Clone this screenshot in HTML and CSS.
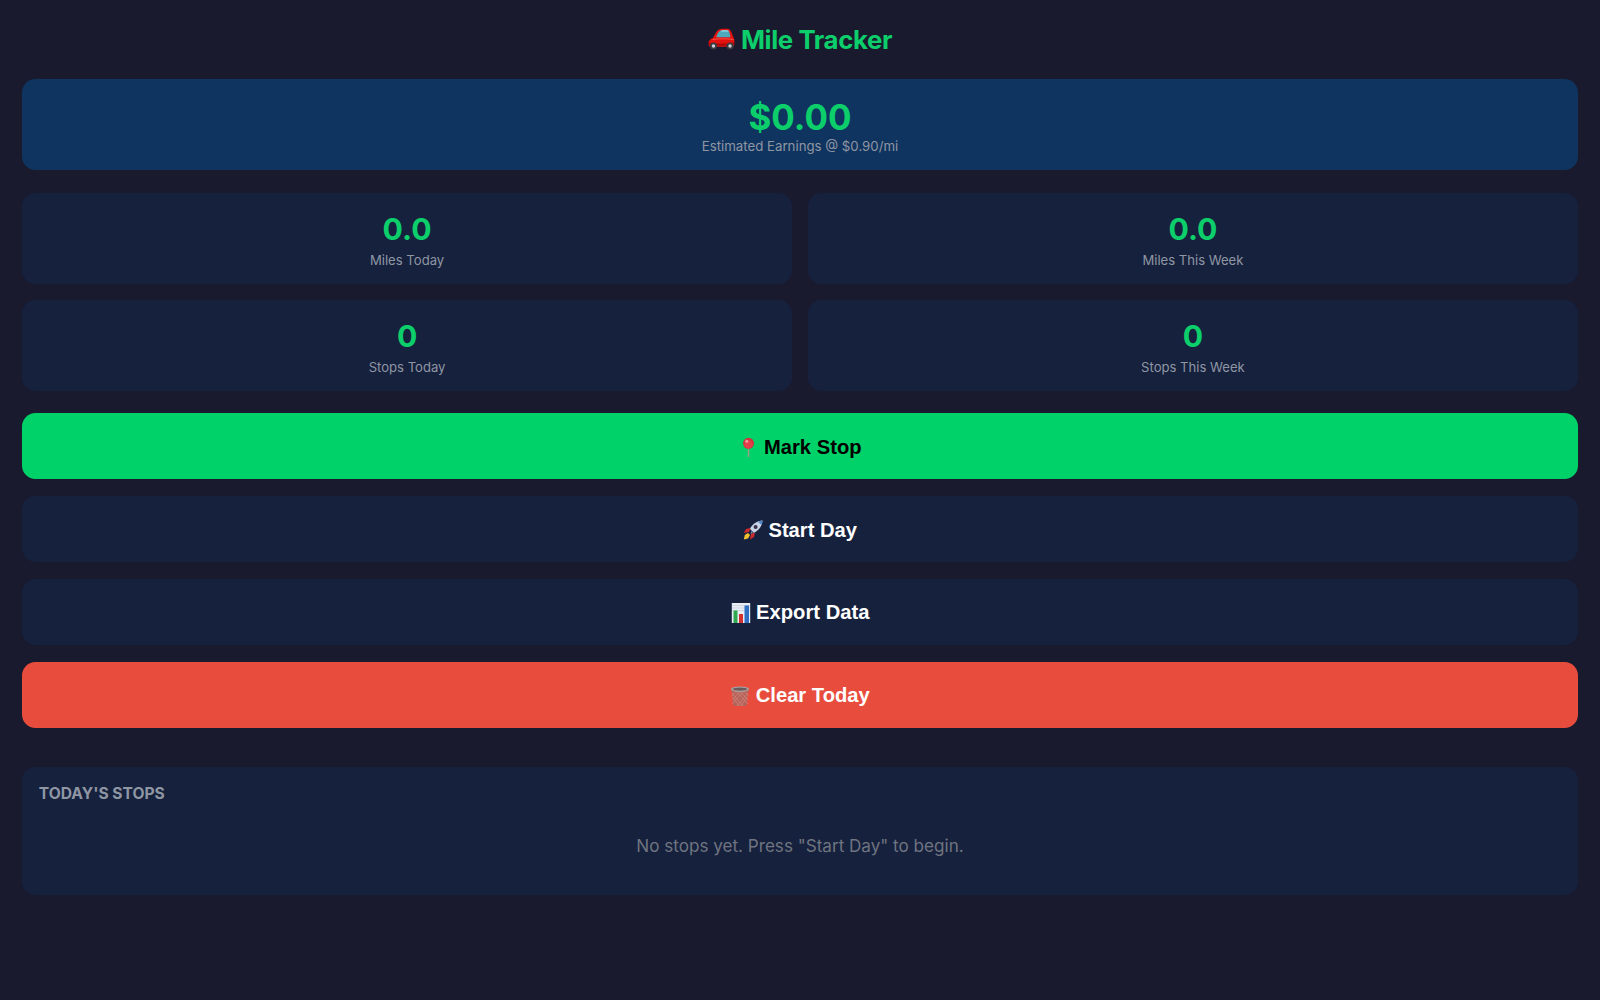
FILE: index.html
```html
<!DOCTYPE html>
<html lang="en">
<head>
<meta charset="utf-8">
<title>Mile Tracker</title>
<link rel="stylesheet" href="styles.css">
</head>
<body>
<main class="app">
  <h1 class="title">
    <svg class="emoji emoji-car" viewBox="0 0 27 22" aria-hidden="true">
      <path d="M.6 15.500c0-3 1.400-4.700 4.400-5.500C7.500 5 9.500 .8 14 .8h5c3 0 4.200 2 5 5l1.700 4c.9 2 .9 6 .3 8-.2.700-1 1-1.800 1H2.500C1.300 18.800.6 17.500.6 15.500z" fill="#e3120f"/>
      <path d="M8.300 9.200C9.500 5.500 11 2.300 14.200 2.300h5c1.800 0 2.600 2.500 3.200 6.900z" fill="#4fa9bd"/>
      <path d="M14 2.300h5.200c.7 0 1.300.4 1.700 1.200H12.500c.4-.7.900-1.100 1.500-1.200z" fill="#9adbe6"/>
      <path d="M.8 14.500c6 1.500 19 1.500 25.300 0v2c-6.500 1.800-19 1.800-25.300 0z" fill="#a80a0a"/>
      <path d="M4.500 11.500c6-1 14-1 21 0" stroke="#ff6a5c" stroke-width=".7" fill="none"/>
      <circle cx="5.500" cy="18" r="3.500" fill="#3a3a42"/><circle cx="5.500" cy="18" r="1.700" fill="#cfcfd6"/>
      <circle cx="22" cy="18" r="3.500" fill="#3a3a42"/><circle cx="22" cy="18" r="1.700" fill="#cfcfd6"/>
    </svg>
    <span>Mile Tracker</span>
  </h1>

  <section class="earnings">
    <div class="earnings-value">$0.00</div>
    <div class="earnings-label">Estimated Earnings @ $0.90/mi</div>
  </section>

  <section class="stats">
    <div class="stat"><div class="stat-value">0.0</div><div class="stat-label">Miles Today</div></div>
    <div class="stat"><div class="stat-value">0.0</div><div class="stat-label">Miles This Week</div></div>
    <div class="stat"><div class="stat-value">0</div><div class="stat-label">Stops Today</div></div>
    <div class="stat"><div class="stat-value">0</div><div class="stat-label">Stops This Week</div></div>
  </section>

  <section class="actions">
    <button class="btn btn-primary">
      <svg class="emoji emoji-btn" viewBox="0 0 20 20" aria-hidden="true">
        <path d="M10.500 10v9.500" stroke="#a8978c" stroke-width="1.400" stroke-linecap="round"/>
        <circle cx="10.500" cy="6.300" r="5.500" fill="#d4323c"/>
        <circle cx="10.500" cy="7.300" r="4.100" fill="#e2404a"/>
        <circle cx="8.700" cy="4.300" r="1.500" fill="#f59aa0"/>
      </svg>
      <span>Mark Stop</span>
    </button>
    <button class="btn btn-dark">
      <svg class="emoji emoji-btn" viewBox="0 0 20 20" aria-hidden="true">
        <path d="M7 8.500C9.500 4 14 1 19.500 .5c-.3 5.500-3.500 9.500-8.500 12.500L7 9z" fill="#c9d3e6"/>
        <path d="M19.500 .5c-.1 1.500-.5 3-1.100 4.300L15 2c1.300-.7 2.900-1.300 4.500-1.500z" fill="#4f86c6"/>
        <path d="M8 11l2 2c-1 .6-1.500.8-2.200.9z" fill="#7d8fae"/>
        <circle cx="12.600" cy="7" r="2" fill="#3a2f4a"/>
        <path d="M7.500 8L3 9 .8 13l5.200-1zM12 12.500L11 17l-4 2.500 1-5.500z" fill="#d02a2a"/>
        <path d="M5 13L1.800 15 .8 19.500l4.200-1 2-3.500z" fill="#f2c230"/>
      </svg>
      <span>Start Day</span>
    </button>
    <button class="btn btn-dark">
      <svg class="emoji emoji-btn" viewBox="0 0 20 20" aria-hidden="true">
        <rect x="0.800" y="0" width="18.400" height="20" fill="#e9eef5"/>
        <path d="M1 2.500h18M1 5h18M1 7.500h18" stroke="#bcc6d4" stroke-width=".6"/>
        <rect x="2.500" y="7.500" width="4" height="12.500" fill="#2fa84f"/>
        <rect x="8" y="11" width="4" height="9" fill="#d3302f"/>
        <rect x="13.500" y="2.500" width="4.500" height="17.500" fill="#2f6fc4"/>
      </svg>
      <span>Export Data</span>
    </button>
    <button class="btn btn-danger">
      <svg class="emoji emoji-btn" viewBox="0 0 20 20" aria-hidden="true">
        <path d="M1.500 4h17l-1.800 15c-.1.600-.5 1-1.100 1H4.400c-.6 0-1-.4-1.100-1z" fill="#b5645c"/>
        <path d="M2 7l11 13M2.500 11l7 9M5 4l13 14M9 4l9 10M13 4l5.500 6M18 7L7 20M17.500 11l-7 9M15 4L2 18M11 4L2.500 14M7 4L2 10" stroke="#dc8b80" stroke-width=".55"/>
        <ellipse cx="10" cy="3.200" rx="9" ry="2.700" fill="#a8a8ac"/>
        <ellipse cx="10" cy="3.200" rx="7.300" ry="1.600" fill="#6c5a58"/>
      </svg>
      <span>Clear Today</span>
    </button>
  </section>

  <section class="stops">
    <h2 class="stops-title">TODAY'S STOPS</h2>
    <p class="stops-empty">No stops yet. Press "Start Day" to begin.</p>
  </section>
</main>
</body>
</html>
```
FILE: styles.css
```css
* { box-sizing: border-box; }

html, body { margin: 0; height: 100%; }

body {
  background: #1a1a2e;
  color: #fff;
  font-family: Inter, "Noto Sans", sans-serif;
}

.app {
  padding: 22.4px;
  display: flex;
  flex-direction: column;
}

.title {
  margin: 0 0 23px;
  height: 34px;
  display: flex;
  align-items: center;
  justify-content: center;
  gap: 6px;
  font-size: 25.8px;
  font-weight: 700;
  letter-spacing: -0.4px;
  color: #0ccf6b;
}

.emoji { display: block; flex: none; }
.emoji-car { width: 27px; height: 22px; }
.emoji-btn { width: 20px; height: 20px; }

.earnings {
  height: 91px;
  padding-top: 3px;
  background: #0f3460;
  border-radius: 13.5px;
  display: flex;
  flex-direction: column;
  align-items: center;
  justify-content: center;
  margin-bottom: 23px;
}

.earnings-value {
  font-size: 34.9px;
  font-weight: 700;
  line-height: 40px;
  color: #0ccf6b;
}

.earnings-label {
  font-size: 13.25px;
  line-height: 18px;
  color: #8f96a3;
}

.stats {
  display: grid;
  grid-template-columns: 1fr 1fr;
  grid-auto-rows: 90.6px;
  gap: 16.5px;
  margin-bottom: 22.4px;
}

.stat {
  padding-top: 2px;
  background: #16213e;
  border-radius: 13.5px;
  display: flex;
  flex-direction: column;
  align-items: center;
  justify-content: center;
}

.stat-value {
  font-size: 30.2px;
  font-weight: 700;
  line-height: 38px;
  color: #0ccf6b;
}

.stat-label {
  margin-top: 2px;
  font-size: 13.1px;
  line-height: 20px;
  color: #8f96a3;
}

.actions {
  display: flex;
  flex-direction: column;
  gap: 16.7px;
  margin-bottom: 39px;
}

.btn {
  height: 66px;
  padding: 2px 0 0;
  border: 0;
  border-radius: 13.5px;
  display: flex;
  align-items: center;
  justify-content: center;
  gap: 5.5px;
  font-family: "Liberation Sans", Arial, sans-serif;
  font-size: 20.2px;
  font-weight: 700;
  color: #fff;
}

.btn-primary { background: #00d26a; color: #000; }
.btn-dark { background: #16213e; }
.btn-danger { background: #e84c3d; }

.stops {
  height: 128px;
  background: #16213e;
  border-radius: 13.5px;
  padding: 17px 16.4px;
}

.stops-title {
  margin: 0;
  font-size: 15.6px;
  line-height: 19px;
  font-weight: 700;
  color: #8f96a3;
}

.stops-empty {
  margin: 31px 0 0;
  text-align: center;
  font-size: 17.1px;
  line-height: 24px;
  color: #6f7480;
}
```
